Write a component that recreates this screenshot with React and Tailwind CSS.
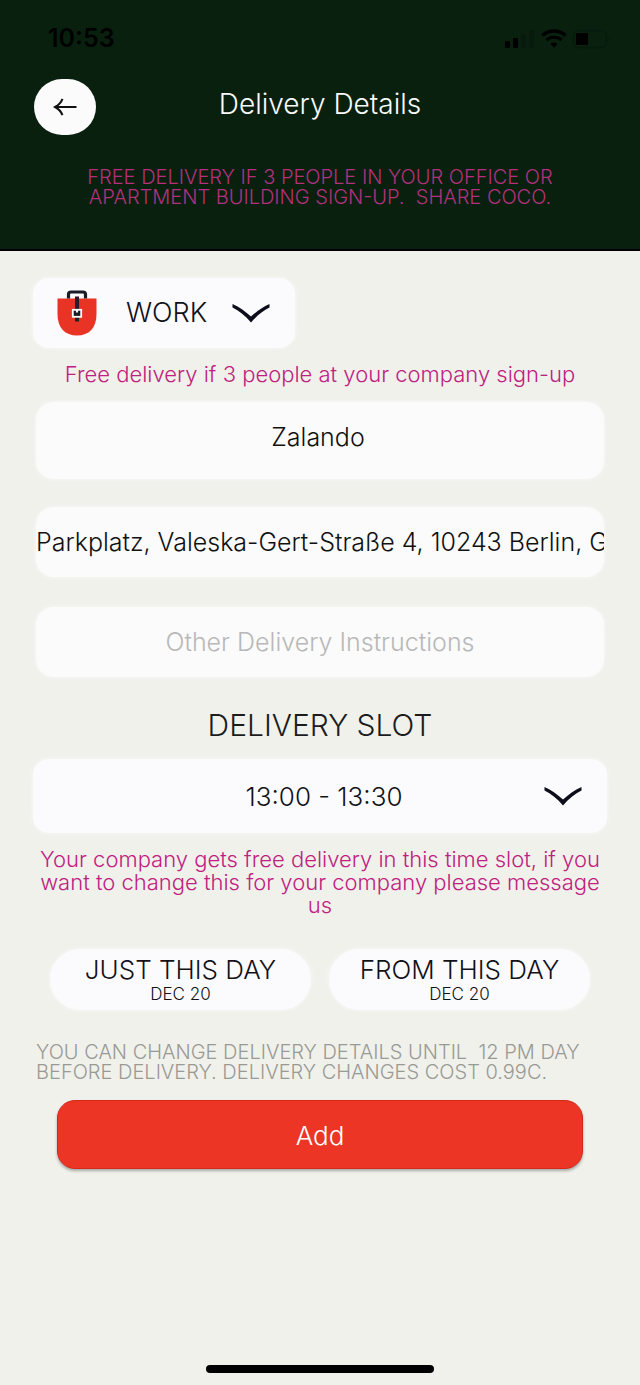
import { useState } from 'react';

const SLOTS = ['12:00 - 12:30', '12:30 - 13:00', '13:00 - 13:30', '13:30 - 14:00'];

const DAY_OPTIONS = [
  { id: 'just', label: 'JUST THIS DAY', date: 'DEC 20' },
  { id: 'from', label: 'FROM THIS DAY', date: 'DEC 20' },
];

const SHARE_NOTE =
  'FREE DELIVERY IF 3 PEOPLE IN YOUR OFFICE OR APARTMENT BUILDING SIGN-UP.\u00a0 SHARE COCO.';

const CHANGE_NOTE =
  'YOU CAN CHANGE DELIVERY DETAILS UNTIL\u00a0 12 PM DAY BEFORE DELIVERY. DELIVERY CHANGES COST 0.99C.';

const StatusBar = () => (
  <div className="flex h-[76px] items-center justify-between pl-12 pr-7 pt-px text-black">
    <span className="text-[25px] font-semibold leading-none">10:53</span>
    <svg className="h-5 w-[108px]" viewBox="0 0 108 20" fill="none" aria-hidden="true">
      <rect x="1" y="12" width="5" height="7" rx="1" fill="#000" />
      <rect x="9" y="9" width="5" height="10" rx="1" fill="#000" />
      <rect x="17" y="5" width="5" height="14" rx="1" fill="#071b0c" />
      <rect x="25" y="1" width="5" height="18" rx="1" fill="#071b0c" />
      <path d="M38.5 6.5C45 0.5 55 0.5 61.5 6.5" stroke="#000" strokeWidth="3.5" />
      <path d="M42.5 11C46.5 7.3 53.5 7.3 57.5 11" stroke="#000" strokeWidth="3.2" />
      <path d="M46.5 15C48.5 13 51.5 13 53.5 15L50 18.8Z" fill="#000" />
      <rect x="69.5" y="1.5" width="33" height="17" rx="5" stroke="#071b0c" strokeWidth="1.5" />
      <rect x="72" y="4" width="12" height="12" rx="1" fill="#000" />
      <path d="M105 7.5v5c2-1 2-4 0-5Z" fill="#071b0c" />
    </svg>
  </div>
);

const BackArrow = () => (
  <svg className="h-5 w-6" viewBox="0 0 24 20" fill="none" stroke="#111" strokeWidth="2" aria-hidden="true">
    <path d="M23.5 10H2.500" />
    <path d="M9.5 1.800C8.200 5.200 5.800 8 2 10C5.800 12 8.200 14.800 9.500 18.200" />
  </svg>
);

const Chevron = () => (
  <svg className="h-5 w-10" viewBox="0 0 40 20" fill="#0d0d1c" aria-hidden="true">
    <path d="M1.5 1C8.500 4.200 14.500 8.400 20 13.600C25.500 8.400 31.500 4.200 38.500 1V4.600C32 8 25.500 13 20 19.500C14.500 13 8 8 1.500 4.600Z" />
  </svg>
);

const BagIcon = () => (
  <svg className="h-[46px] w-10" viewBox="0 0 40 46" fill="none" aria-hidden="true">
    <path d="M0.5 8.500H39.500V24C39.500 38 32 45.500 20 45.500C8 45.500 0.500 38 0.500 24Z" fill="#e93425" />
    <path d="M11.500 8.500V4.500Q11.500 2 14 2H26Q28.500 2 28.500 4.500V8.500" stroke="#1c1c28" strokeWidth="3.200" />
    <rect x="18" y="6.500" width="4" height="25" fill="#2a1c26" />
    <rect x="15.800" y="19.800" width="8.400" height="7" fill="#1c1c28" stroke="#fff" strokeWidth="1.800" />
    <rect x="19" y="19" width="2" height="3.500" fill="#fff" />
  </svg>
);

const Header = () => (
  <header className="h-[251px] border-b-2 border-black bg-[#09200f]">
    <StatusBar />
    <div className="grid grid-cols-[62px_1fr_62px] items-center px-[34px] pt-[3px]">
      <button
        type="button"
        aria-label="Back"
        className="flex h-14 items-center justify-center rounded-[28px] bg-[#fbfbfb]"
      >
        <BackArrow />
      </button>
      <h1 className="-mt-1.5 text-center text-[28px] font-light leading-8 text-[#fafafa]">Delivery Details</h1>
    </div>
    <p className="mx-auto mt-8 max-w-[500px] text-center text-[20px] font-light leading-5 text-[#b4307e]">
      {SHARE_NOTE}
    </p>
  </header>
);

const fieldClass =
  'block w-full rounded-[18px] bg-[#fbfbfb] text-center text-[25px] font-light text-[#111] shadow-[0_0_4px_#fafafa] outline-none placeholder:text-[#b8b8b8]';

const App = () => {
  const [place, setPlace] = useState('WORK');
  const [slot, setSlot] = useState('13:00 - 13:30');

  return (
    <div className="flex min-h-screen flex-col bg-[#f0f1eb] font-['Inter','Liberation_Sans',sans-serif] font-light">
      <Header />

      <main className="flex-1 px-9 pt-[27px]">
        <div className="relative -mx-[3px] w-[262px]">
          <select
            aria-label="Delivery place"
            value={place}
            onChange={(e) => setPlace(e.target.value)}
            className="block h-[70px] w-full appearance-none rounded-2xl bg-[#fbfbfd] pl-[93px] text-[27px] font-light text-[#111118] shadow-[0_0_4px_#fafafa]"
          >
            <option>WORK</option>
            <option>HOME</option>
          </select>
          <div className="pointer-events-none absolute inset-y-0 left-6 flex items-center">
            <BagIcon />
          </div>
          <div className="pointer-events-none absolute inset-y-0 right-6 flex items-center">
            <Chevron />
          </div>
        </div>

        <p className="mt-3.5 text-center text-[22px] leading-6 text-[#bf2180]">
          Free delivery if 3 people at your company sign-up
        </p>

        <input aria-label="Company" defaultValue="Zalando" className={`${fieldClass} mt-4 h-[77px] pb-2 pr-1`} />
        <input
          aria-label="Address"
          defaultValue="Parkplatz, Valeska-Gert-Straße 4, 10243 Berlin, Germany"
          className={`${fieldClass} mt-7 h-[70px]`}
        />
        <input
          aria-label="Delivery instructions"
          placeholder="Other Delivery Instructions"
          className={`${fieldClass} mt-[30px] h-[70px]`}
        />

        <h2 className="mt-8 text-center text-[30px] font-light leading-8 text-[#1c1c1c]">DELIVERY SLOT</h2>

        <div className="relative -mx-[3px] mt-[18px]">
          <select
            aria-label="Delivery slot"
            value={slot}
            onChange={(e) => setSlot(e.target.value)}
            className="block h-[74px] w-full appearance-none rounded-2xl bg-[#fbfbfd] pl-2 text-center text-[26px] font-light text-[#111118] shadow-[0_0_4px_#fafafa] [text-align-last:center]"
          >
            {SLOTS.map((s) => (
              <option key={s}>{s}</option>
            ))}
          </select>
          <div className="pointer-events-none absolute inset-y-0 right-6 flex items-center">
            <Chevron />
          </div>
        </div>

        <p className="-mx-2 mt-[15px] text-center text-[22px] leading-[23px] text-[#bf2180]">
          Your company gets free delivery in this time slot, if you want to change this for your company please message
          us
        </p>

        <div className="mt-8 grid grid-cols-2 gap-[18px] px-3.5">
          {DAY_OPTIONS.map((day) => (
            <button
              key={day.id}
              type="button"
              className="flex h-[61px] flex-col items-center justify-center rounded-full bg-[#fbfbfd] text-[#111118] shadow-[0_0_4px_#fafafa]"
            >
              <span className="text-[26px] leading-7">{day.label}</span>
              <span className="text-[17px] leading-5">{day.date}</span>
            </button>
          ))}
        </div>

        <p className="mt-8 text-[20px] leading-5 text-[#999995]">{CHANGE_NOTE}</p>

        <div className="mt-[18px] px-[21px]">
          <button
            type="button"
            className="h-[69px] w-full rounded-[18px] border border-[#d42a1c] bg-[#ec3524] pt-0.5 text-[26px] text-white shadow-[0_2px_3px_rgba(0,0,0,0.3)]"
          >
            Add
          </button>
        </div>
      </main>

      <div className="mx-auto mb-3 mt-8 h-2 w-[228px] rounded-full bg-black" />
    </div>
  );
};

export default App;
